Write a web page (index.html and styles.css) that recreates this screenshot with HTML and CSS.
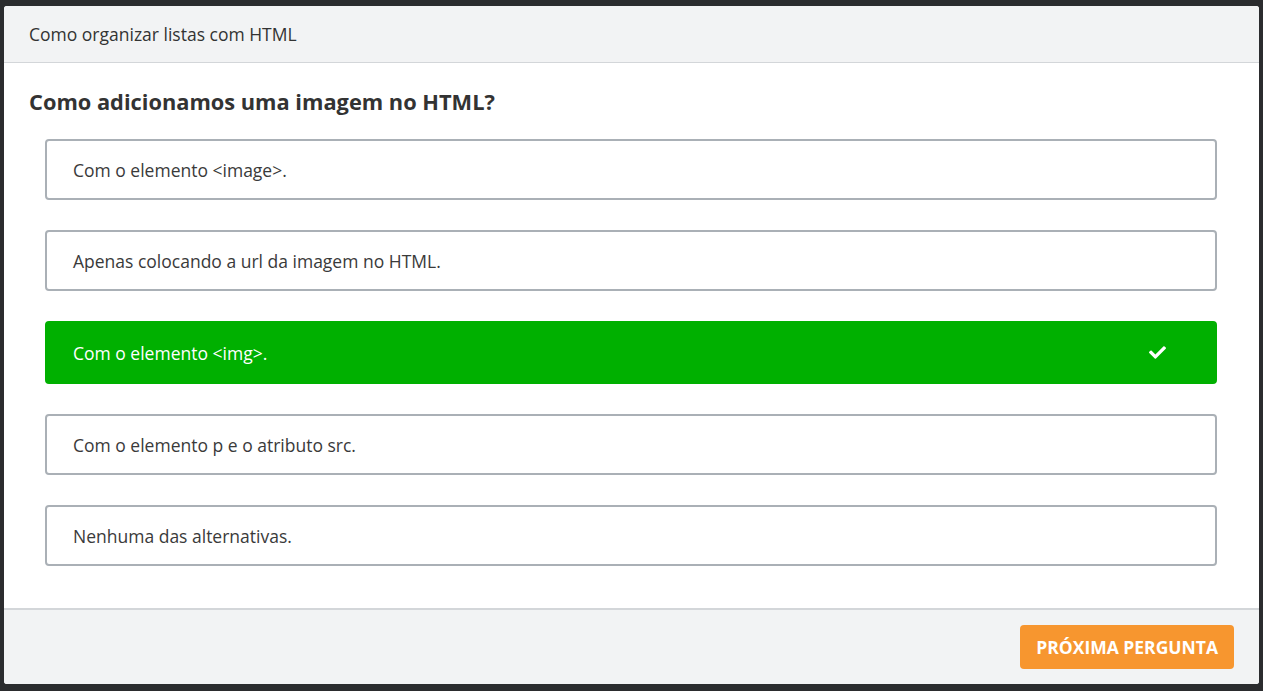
FILE: index.html
```html
<!DOCTYPE html>
<html lang="pt-BR">
<head>
<meta charset="utf-8">
<title>Quiz</title>
<link rel="stylesheet" href="styles.css">
</head>
<body>
<div class="modal">
  <div class="modal-header">Como organizar listas com HTML</div>
  <div class="modal-body">
    <h2 class="question">Como adicionamos uma imagem no HTML?</h2>
    <ul class="options">
      <li class="option">Com o elemento &lt;image&gt;.</li>
      <li class="option">Apenas colocando a url da imagem no HTML.</li>
      <li class="option correct">Com o elemento &lt;img&gt;.
        <svg class="check" viewBox="0 0 512 512" width="17" height="17"><path fill="#fff" d="M173.9 439.4L7.5 273c-10-10-10-26.2 0-36.2l36.2-36.2c10-10 26.2-10 36.2 0L192 312.7 432.1 72.6c10-10 26.2-10 36.2 0l36.2 36.2c10 10 10 26.2 0 36.2L210.1 439.4c-10 10-26.2 10-36.2 0z"/></svg>
      </li>
      <li class="option">Com o elemento p e o atributo src.</li>
      <li class="option">Nenhuma das alternativas.</li>
    </ul>
  </div>
  <div class="modal-footer">
    <button class="next-btn">Próxima pergunta</button>
  </div>
</div>
</body>
</html>
```

FILE: styles.css
```css
html, body {
  margin: 0;
  padding: 0;
}
body {
  background: #2b2c2e;
  padding: 6px 4px 7px;
  font-family: "Open Sans", "Liberation Sans", sans-serif;
  color: #333;
}
.modal {
  background: #fff;
  border-radius: 3px;
  overflow: hidden;
  display: flex;
  flex-direction: column;
  height: 678px;
}
.modal-header {
  background: #f2f3f4;
  border-bottom: 1px solid #d3d6d9;
  height: 56px;
  display: flex;
  align-items: center;
  padding: 0 25px;
  font-size: 17.5px;
  color: #333;
}
.modal-body {
  flex: 1;
  padding: 25px 25px 0;
}
.question {
  margin: 0 0 23px;
  font-size: 21.8px;
  font-weight: 700;
  line-height: 28px;
  color: #333;
}
.options {
  list-style: none;
  margin: 0 17px 0 16px;
  padding: 0;
  display: flex;
  flex-direction: column;
  gap: 30px;
}
.option {
  height: 57px;
  border: 2px solid #aab0b6;
  border-radius: 4px;
  display: flex;
  align-items: center;
  justify-content: space-between;
  padding: 0 49px 0 26px;
  font-size: 17.5px;
  color: #3a3a3a;
}
.option.correct {
  background: #00b000;
  border-color: #00b000;
  color: #fff;
  height: 59px;
}
.check {
  display: block;
}
.modal-footer {
  background: #f2f3f4;
  border-top: 2px solid #d3d6d9;
  height: 74px;
  display: flex;
  align-items: center;
  justify-content: flex-end;
  padding: 0 25px;
}
.next-btn {
  background: #f7962f;
  color: #fff;
  border: none;
  border-radius: 4px;
  height: 44px;
  padding: 0 16px;
  font-family: "Open Sans", "Liberation Sans", sans-serif;
  font-size: 17.5px;
  font-weight: 700;
  text-transform: uppercase;
  cursor: pointer;
}
```
